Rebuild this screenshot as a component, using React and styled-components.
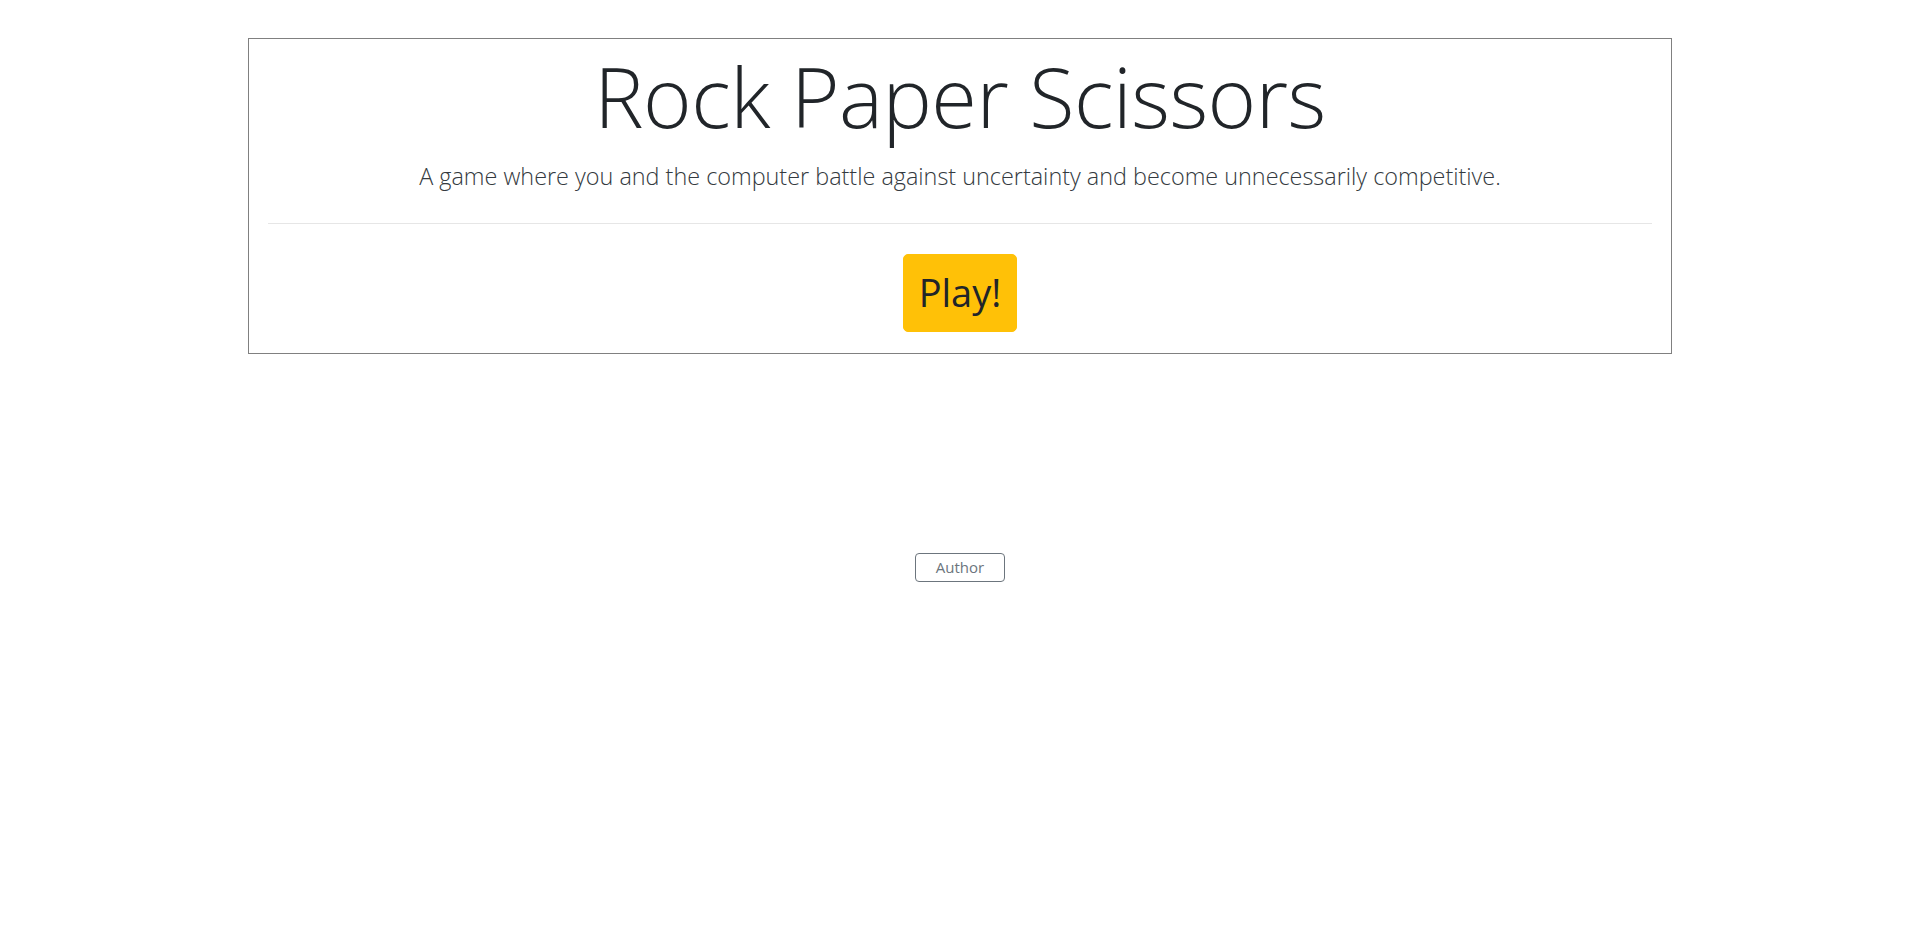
import React from 'react';
import styled, { createGlobalStyle } from 'styled-components';

const GlobalStyle = createGlobalStyle`
  body {
    margin: 0;
    background: #fff;
    font-family: "Open Sans", "Liberation Sans", sans-serif;
    color: #212529;
  }
`;

const Page = styled.div`
  display: flex;
  flex-direction: column;
  align-items: center;
  padding-top: 38px;
`;

const Card = styled.div`
  width: 1424px;
  box-sizing: border-box;
  border: 1px solid #808080;
  padding: 0 19px 21px;
  text-align: center;
`;

const Title = styled.h1`
  font-size: 83px;
  font-weight: 300;
  line-height: 1.2;
  margin: 7px 0 0;
  letter-spacing: -0.5px;
`;

const Lead = styled.p`
  font-size: 23.4px;
  font-weight: 300;
  margin: 14px 0 0;
  color: #343a40;
`;

const Divider = styled.hr`
  border: 0;
  border-top: 1px solid #e6e6e6;
  margin: 31px 0 30px;
`;

const PlayButton = styled.button`
  font-family: inherit;
  font-size: 38px;
  font-weight: 400;
  line-height: 1.5;
  padding: 9px 15px 10px;
  background: #ffc107;
  color: #212529;
  border: 1px solid #ffc107;
  border-radius: 5px;
  cursor: pointer;
`;

const Footer = styled.div`
  margin-top: 199px;
`;

const AuthorButton = styled.button`
  font-family: inherit;
  font-size: 15px;
  line-height: 1.4;
  padding: 3px 20px;
  background: transparent;
  color: #6c757d;
  border: 1px solid #6c757d;
  border-radius: 4px;
  cursor: pointer;
`;

const App = () => (
  <>
    <GlobalStyle />
    <Page>
      <Card>
        <Title>Rock Paper Scissors</Title>
        <Lead>A game where you and the computer battle against uncertainty and become unnecessarily competitive.</Lead>
        <Divider />
        <PlayButton>Play!</PlayButton>
      </Card>
      <Footer>
        <AuthorButton>Author</AuthorButton>
      </Footer>
    </Page>
  </>
);

export default App;
